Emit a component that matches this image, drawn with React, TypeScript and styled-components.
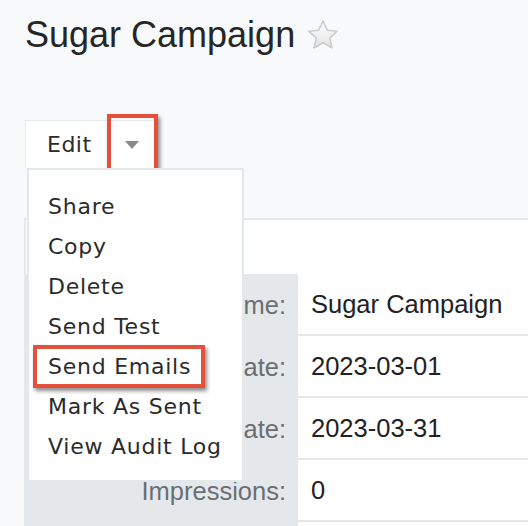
import styled, { createGlobalStyle, css } from 'styled-components';

const GlobalStyle = createGlobalStyle`
  html,
  body {
    margin: 0;
    padding: 0;
    overflow: hidden;

    background-color: #f8f9fb;
  }
`;

const Page = styled.div`
  padding: 15px 0 0 25px;

  font-family: 'Liberation Sans', Arial, sans-serif;
`;

const Header = styled.div`
  display: flex;
  align-items: center;
  gap: 10px;
`;

const Title = styled.h1`
  margin: 0;

  font-size: 36px;
  font-weight: 400;
  line-height: 40px;
  color: #262626;
`;

const StarIcon = () => (
  <svg width="36" height="34" viewBox="0 0 36 34" aria-hidden="true">
    <defs>
      <linearGradient id="star-fill" x1="0" y1="0" x2="0" y2="1">
        <stop offset="0" stopColor="#ffffff" />
        <stop offset="1" stopColor="#e2e2e2" />
      </linearGradient>
    </defs>
    <polygon
      points="18,3 22.3,12.2 32.3,13.2 24.8,20 26.9,29.8 18,24.8 9.1,29.8 11.2,20 3.7,13.2 13.7,12.2"
      fill="url(#star-fill)"
      stroke="#cccccc"
      strokeWidth="1.6"
      strokeLinejoin="round"
    />
  </svg>
);

const Highlight = css`
  position: relative;

  &::after {
    content: '';

    position: absolute;

    border: 4px solid #e5503b;

    box-shadow: 2px 3px 4px rgba(0, 0, 0, 0.45);

    pointer-events: none;
  }
`;

const ButtonGroup = styled.div`
  position: relative;

  margin-top: 65px;

  display: inline-flex;
  align-items: stretch;
  height: 47px;

  border: 1px solid #e6eaed;
  border-bottom: none;

  background-color: #ffffff;

  font-family: 'DejaVu Sans', Verdana, sans-serif;
`;

const EditLabel = styled.span`
  padding: 0 17px 0 21px;

  display: flex;
  align-items: center;

  font-size: 22px;
  letter-spacing: 0.5px;
  color: #2b2b2b;
`;

const CaretToggle = styled.span`
  ${Highlight}

  width: 47px;

  display: flex;
  align-items: center;
  justify-content: center;

  &::after {
    top: -7px;
    bottom: -4px;
    left: -2px;
    right: -2px;
  }
`;

const Caret = styled.span`
  width: 0;
  height: 0;

  border-left: 7px solid transparent;
  border-right: 7px solid transparent;
  border-top: 8px solid #8a8a8a;
`;

const Menu = styled.ul`
  position: absolute;
  top: 100%;
  left: 1px;
  z-index: 2;

  margin: 0;
  padding: 17px 0 13px;

  width: 213px;

  list-style: none;

  border: 2px solid #e3e8eb;

  background-color: #ffffff;
`;

const MenuItem = styled.li<{ $highlighted?: boolean }>`
  padding-left: 19px;

  font-size: 22px;
  line-height: 40px;
  letter-spacing: 0.75px;
  color: #2b2b2b;
  white-space: nowrap;

  ${({ $highlighted }) =>
    $highlighted &&
    css`
      ${Highlight}

      &::after {
        top: -2px;
        bottom: -1px;
        left: 4px;
        right: 37px;
      }
    `}
`;

const Panel = styled.div`
  margin: 50px 0 0 -1px;
  padding-top: 54px;

  border-top: 2px solid #e4e8eb;
  border-left: 2px solid #e4e8eb;

  background-color: #ffffff;
`;

const Row = styled.div`
  display: grid;
  grid-template-columns: 272px 1fr;
`;

const Label = styled.div`
  padding-right: 12px;

  display: flex;
  align-items: center;
  justify-content: flex-end;

  background-color: #e4e8eb;

  font-size: 25.5px;
  color: #6b6f72;
`;

const Value = styled.div`
  padding-left: 13px;

  display: flex;
  align-items: center;
  height: 60px;

  border-bottom: 2px solid #e4e8eb;

  font-size: 25.5px;
  color: #222222;
`;

const menuItems = [
  'Share',
  'Copy',
  'Delete',
  'Send Test',
  'Send Emails',
  'Mark As Sent',
  'View Audit Log',
];

const fields = [
  { label: 'Name:', value: 'Sugar Campaign' },
  { label: 'Start Date:', value: '2023-03-01' },
  { label: 'End Date:', value: '2023-03-31' },
  { label: 'Impressions:', value: '0' },
  { label: '', value: '' },
];

const App = () => {
  return (
    <>
      <GlobalStyle />
      <Page>
        <Header>
          <Title>Sugar Campaign</Title>
          <StarIcon />
        </Header>
        <ButtonGroup>
          <EditLabel>Edit</EditLabel>
          <CaretToggle>
            <Caret />
          </CaretToggle>
          <Menu>
            {menuItems.map((item) => (
              <MenuItem key={item} $highlighted={item === 'Send Emails'}>
                {item}
              </MenuItem>
            ))}
          </Menu>
        </ButtonGroup>
        <Panel>
          {fields.map((field, index) => (
            <Row key={index}>
              <Label>{field.label}</Label>
              <Value>{field.value}</Value>
            </Row>
          ))}
        </Panel>
      </Page>
    </>
  );
};

export default App;
